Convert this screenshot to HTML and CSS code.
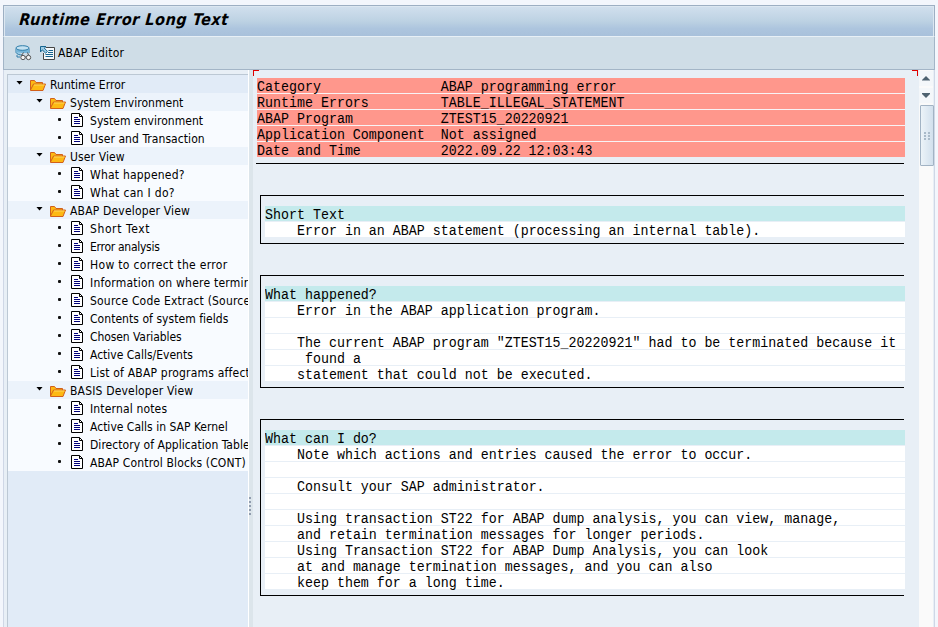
FILE: index.html
```html
<!DOCTYPE html>
<html lang="en">
<head>
<meta charset="utf-8">
<title>Runtime Error Long Text</title>
<link rel="stylesheet" href="styles.css">
</head>
<body>
<svg class="defs" width="0" height="0">
  <symbol id="folder" viewBox="0 0 16 12"><path d="M.5 11V1.500h4l1.500 2h6.500v2M.5 11l3-6h12l-2.500 6.500H.5z" fill="#fdb913" stroke="#d2601a"/><path d="M4 6h10.500" stroke="#ffd95a"/></symbol>
  <symbol id="doc" viewBox="0 0 12 14"><path d="M.5.5h8l3 3v10H.5z" fill="#fff" stroke="#000"/><path d="M8.500.5v3h3" fill="none" stroke="#000"/><path d="M3 4.500h4M3 6.500h6M3 8.500h6M3 10.500h6" stroke="#00007b"/></symbol>
</svg>
<div class="window">
  <header class="title"><h1>Runtime Error Long Text</h1></header>
  <nav class="toolbar">
    <svg class="display" width="17" height="16" viewBox="0 0 17 16"><path d="M1 3.500v4c1 2 4 2.500 6 2.500M14 3.500V8" fill="#9ccbe5" stroke="#2f7da9"/><path d="M1 4h13v4H7L1 7z" fill="#75b4d8"/><ellipse cx="7.500" cy="3" rx="6.500" ry="2.300" fill="#c4e1f1" stroke="#2f7da9"/><path d="M2 10v2h3" fill="none" stroke="#2f7da9"/><g fill="#f4f4f4" stroke="#555"><circle cx="8" cy="12.500" r="2.200"/><circle cx="13.500" cy="12.500" r="2.200"/><path d="M6.500 10.500l2-3M13.500 10l-1-2.500M10.200 12h1" fill="none"/></g></svg>
    <svg class="edit" width="16" height="15" viewBox="0 0 16 15"><path d="M6 1.500h8.500v12h-11V7" fill="#f5f9fc" stroke="#454545"/><path d="M.5 6V.5H6L4.300 2.200l3.200 3.200-1.800 1.800-3.400-3.300z" fill="#9ccbe5" stroke="#16648f"/><path d="M8.500 4.500H13M8 6.500h5M5.500 8.500H13M5.500 10.500H13" stroke="#16648f"/></svg>
    <span>ABAP Editor</span>
  </nav>
  <div class="body">
    <aside class="tree" id="tree"></aside>
    <div class="splitter"><i></i><i></i><i></i><i></i><i></i></div>
    <main class="report">
      <div class="corners"><b></b><b></b></div>
      <section class="summary" id="summary"></section>
      <div id="sections"></div>
    </main>
    <div class="scrollbar">
      <div class="arrow"><svg width="8" height="5" viewBox="0 0 8 5"><path d="M0 4.500V4l4-4 4 4v.5z" fill="#4e6270"/></svg></div>
      <div class="arrow"><svg width="8" height="5" viewBox="0 0 8 5"><path d="M0 0v1l4 4 4-4V0z" fill="#4e6270"/></svg></div>
      <div class="thumb"><i></i><i></i><i></i><i></i><i></i><i></i></div>
    </div>
  </div>
</div>
<script src="app.js"></script>
</body>
</html>
```
FILE: styles.css
```css
* { box-sizing: border-box; }
body { margin: 0; width: 938px; height: 627px; overflow: hidden; background: #f3f6fc; font: 12px "DejaVu Sans Condensed", "DejaVu Sans", sans-serif; font-stretch: condensed; color: #000; }
.defs { position: absolute; }
.window { margin: 5px 3px 0; width: 932px; height: 622px; border-left: 1px solid #cfd7e6; border-right: 1px solid #cfd7e6; background: #e8eff6; display: flex; flex-direction: column; }
.title { height: 32px; margin: 0 -1px; border: 1px solid #9dafc3; border-bottom: 1px solid #e8f0f6; background: linear-gradient(#d2e0ee, #bdd2e3 50%, #adc5de 75%, #a9c1db); box-shadow: inset 1px 1px #dce7f1, inset -1px 0 #dce7f1; padding-left: 15px; flex: none; }
h1 { margin: 0; font-size: 16px; line-height: 27px; font-style: italic; font-weight: bold; letter-spacing: .55px; white-space: nowrap; transform: skewX(-5deg); transform-origin: 0 70%; }
.toolbar { height: 33px; margin: 0 -1px; border: 1px solid #a3b5c7; border-top: 0; background: #cfdde7; display: flex; align-items: center; padding-left: 11px; flex: none; white-space: nowrap; }
.toolbar span { letter-spacing: .18px; }
.display { margin-right: 8px; }
.edit { margin-right: 2px; }
.body { flex: 1; display: flex; min-height: 0; }
.tree { margin: 4px 0 0 3px; width: 241px; border-top: 1px solid #bcc8d4; border-left: 1px solid #bcc8d4; background: #e1ebf7; overflow: hidden; flex: none; }
.node { height: 18px; display: flex; align-items: center; white-space: nowrap; }
.node span { padding-top: 2px; }
.node svg { flex: none; }
.root { background: #e1ebf7; padding-left: 8px; }
.group { background: #ecf3fb; padding-left: 28px; }
.leaf { background: #f8fbff; padding-left: 50px; }
.caret { width: 7px; height: 4px; background: #000; clip-path: polygon(0 0, 100% 0, 50% 100%); margin: 0 7px 3px 0; flex: none; }
.node .folder { width: 16px; height: 12px; margin: 1px 4px 0 0; }
.dot { width: 3px; height: 3px; border-radius: 1px; background: #111; margin: 0 10px 1px 0; flex: none; }
.node .doc { width: 12px; height: 14px; margin-right: 7px; }
.splitter { width: 5px; border-left: 1px solid #fff; background: #dce5eb; display: flex; flex-direction: column; gap: 2px; padding-top: 427px; flex: none; }
.splitter i { width: 2px; height: 2px; background: #909cae; }
.report { width: 666px; flex: none; }
.corners { height: 8px; display: flex; justify-content: space-between; padding-right: 1px; }
.corners b { width: 6px; height: 6px; border-top: 1px solid #e00000; border-left: 1px solid #e00000; }
.corners b + b { border-left: 0; border-right: 1px solid #e00000; }
.summary { margin-left: 3px; width: 648px; border-bottom: 1px solid #000; padding: 0 0 5px 1px; }
.line { height: 15px; margin-bottom: 1px; background: #fff; font: 13.32px/15px "Liberation Mono", monospace; white-space: pre; }
.line span { display: block; height: 15px; line-height: 17px; transform: scaleY(1.15); transform-origin: 0 50%; }
.summary .line { width: 648px; background: #ff978c; box-shadow: 0 1px #f8f3f5; }
.summary .line:last-child { box-shadow: none; }
.box { margin: 31px 0 0 7px; width: 644px; border: 1px solid #000; border-right: 0; padding: 10px 0 5px 4px; }
.box .line { width: 640px; }
.box .line:first-child { background: #c4eaec; }
.scrollbar { width: 14px; background: #fafafa; padding-top: 1px; }
.arrow { height: 15px; margin-bottom: 2px; background: #f4f7fa; display: flex; align-items: center; justify-content: center; }
.thumb { margin-left: 1px; width: 14px; height: 61px; border: 1px solid #a2b3c4; border-radius: 1px; background: linear-gradient(90deg, #ecf3f8, #d2e0ed); display: grid; grid-template-columns: 2px 2px; grid-auto-rows: 2px; gap: 1px 2px; justify-content: center; align-content: center; }
.thumb i { background: #a9bac9; }
```
FILE: app.js
```js
// kind, label, letter spacing in px
const tree = [
  ["root", "Runtime Error", .04], ["group", "System Environment", .04],
  ["leaf", "System environment", .04], ["leaf", "User and Transaction", .07],
  ["group", "User View", .13], ["leaf", "What happened?", .22], ["leaf", "What can I do?", .32],
  ["group", "ABAP Developer View", .18], ["leaf", "Short Text", .6], ["leaf", "Error analysis", -.28],
  ["leaf", "How to correct the error", .33], ["leaf", "Information on where terminated", .22],
  ["leaf", "Source Code Extract (Source code changed)", .2], ["leaf", "Contents of system fields", .05],
  ["leaf", "Chosen Variables", -.08], ["leaf", "Active Calls/Events", 0], ["leaf", "List of ABAP programs affected", .2],
  ["group", "BASIS Developer View", .18], ["leaf", "Internal notes", .16], ["leaf", "Active Calls in SAP Kernel", .01],
  ["leaf", "Directory of Application Tables", .04], ["leaf", "ABAP Control Blocks (CONT)", .15]
];
document.getElementById("tree").innerHTML = tree.map(([kind, label, spacing]) =>
  `<div class="node ${kind}">` + (kind === "leaf"
    ? '<i class="dot"></i><svg class="doc"><use href="#doc"/></svg>'
    : '<i class="caret"></i><svg class="folder"><use href="#folder"/></svg>') +
  `<span style="letter-spacing:${spacing}px">${label}</span></div>`).join("");

const line = text => `<div class="line"><span>${text || " "}</span></div>`;
document.getElementById("summary").innerHTML = [
  ["Category", "ABAP programming error"], ["Runtime Errors", "TABLE_ILLEGAL_STATEMENT"],
  ["ABAP Program", "ZTEST15_20220921"], ["Application Component", "Not assigned"],
  ["Date and Time", "2022.09.22 12:03:43"]
].map(([k, v]) => line(k.padEnd(23) + v)).join("");

document.getElementById("sections").innerHTML = [
  ["Short Text", "    Error in an ABAP statement (processing an internal table)."],
  ["What happened?", "    Error in the ABAP application program.", "",
    '    The current ABAP program "ZTEST15_20220921" had to be terminated because it',
    "     found a", "    statement that could not be executed."],
  ["What can I do?", "    Note which actions and entries caused the error to occur.", "",
    "    Consult your SAP administrator.", "",
    "    Using transaction ST22 for ABAP dump analysis, you can view, manage,",
    "    and retain termination messages for longer periods.",
    "    Using Transaction ST22 for ABAP Dump Analysis, you can look",
    "    at and manage termination messages, and you can also",
    "    keep them for a long time."]
].map(lines => `<section class="box">${lines.map(line).join("")}</section>`).join("");
```
